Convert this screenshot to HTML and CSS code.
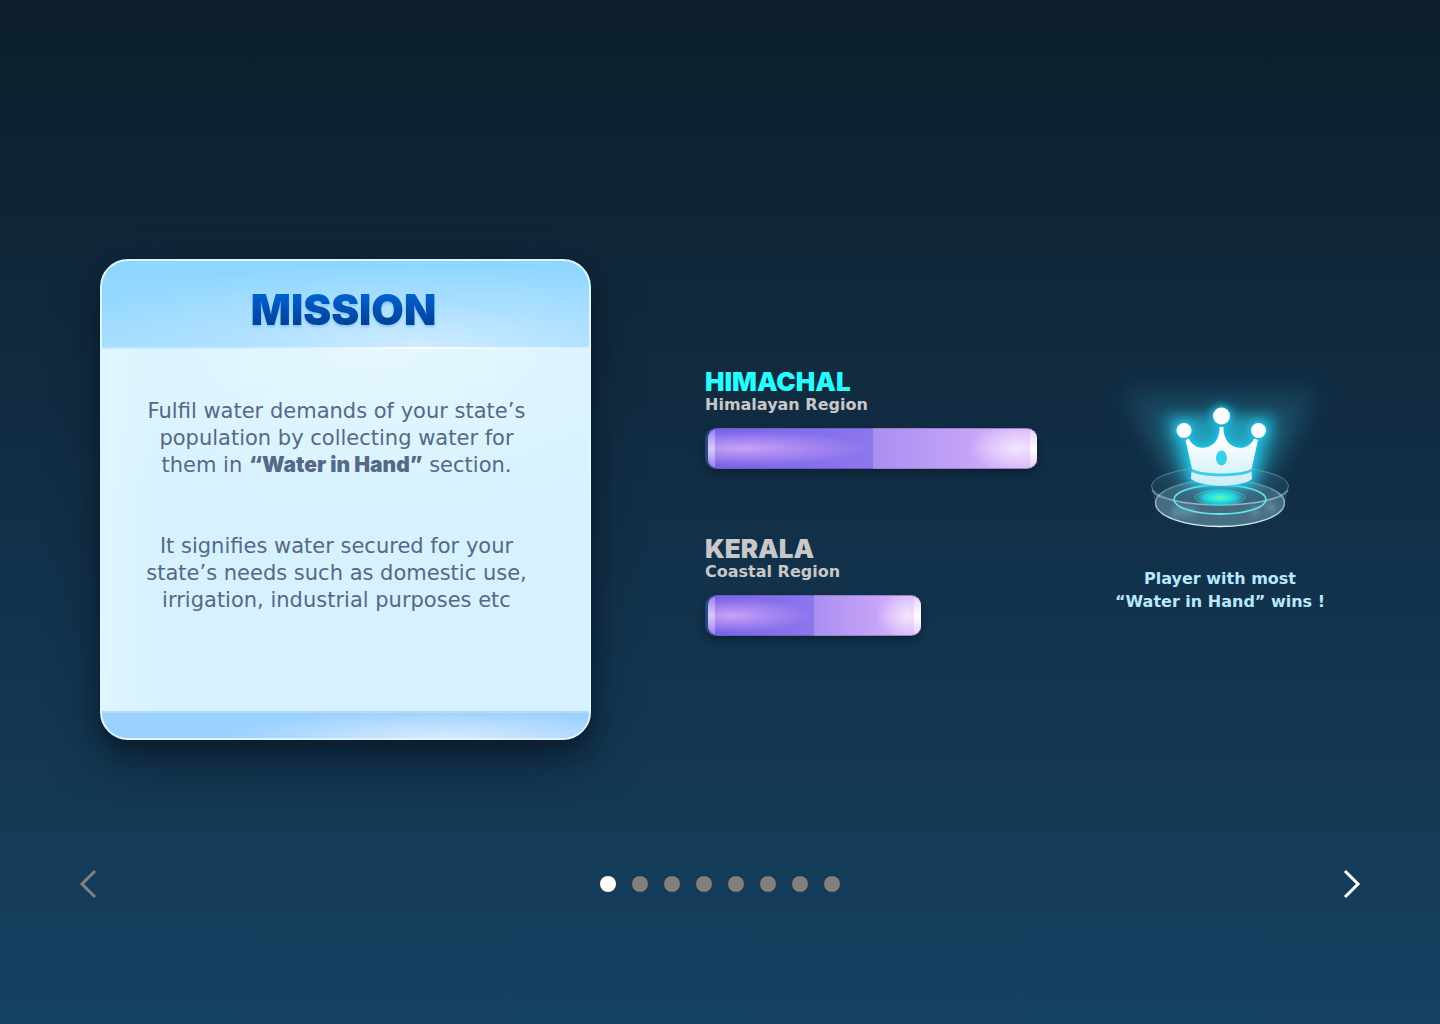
FILE: index.html
```html
<!DOCTYPE html>
<html lang="en">
<head>
<meta charset="utf-8">
<meta name="viewport" content="width=device-width, initial-scale=1">
<title>Mission</title>
<link rel="stylesheet" href="styles.css">
</head>
<body>
<main class="stage">
  <article class="card">
    <header class="card-head"><h1>MISSION</h1></header>
    <div class="card-body">
      <p>Fulfil water demands of your state’s<br>population by collecting water for<br>them in <strong>“Water in Hand”</strong> section.</p>
      <p>It signifies water secured for your<br>state’s needs such as domestic use,<br>irrigation, industrial purposes etc</p>
    </div>
    <footer class="card-foot"></footer>
  </article>

  <section class="scores">
    <div class="player">
      <h2 class="leader">HIMACHAL</h2>
      <p>Himalayan Region</p>
      <div class="bar" style="width:100%"><span class="fill fill-a"></span><span class="fill fill-b"></span></div>
    </div>
    <div class="player">
      <h2>KERALA</h2>
      <p>Coastal Region</p>
      <div class="bar" style="width:65%"><span class="fill fill-a"></span><span class="fill fill-b"></span></div>
    </div>
  </section>

  <section class="winner">
    <svg viewBox="0 0 240 200" aria-hidden="true">
      <defs>
        <linearGradient id="crown" x1="0" y1="56" x2="0" y2="136" gradientUnits="userSpaceOnUse"><stop offset=".4" stop-color="#fff"/><stop offset="1" stop-color="#ccecf6"/></linearGradient>
        <linearGradient id="beam" x1="0" y1="20" x2="0" y2="132" gradientUnits="userSpaceOnUse"><stop offset="0" stop-color="#2fa5c5" stop-opacity="0"/><stop offset="1" stop-color="#35b4d0" stop-opacity=".8"/></linearGradient>
        <radialGradient id="core"><stop offset="0" stop-color="#7df0a0"/><stop offset=".35" stop-color="#2beee2"/><stop offset=".7" stop-color="#27d9e2" stop-opacity=".8"/><stop offset="1" stop-color="#27cfe0" stop-opacity="0"/></radialGradient>
        <linearGradient id="glass" x1="0" y1="130" x2="0" y2="177" gradientUnits="userSpaceOnUse"><stop offset="0" stop-color="#8ed3e3" stop-opacity=".22"/><stop offset="1" stop-color="#9ed3e3" stop-opacity=".3"/></linearGradient>
        <linearGradient id="rim" x1="0" y1="130" x2="0" y2="177" gradientUnits="userSpaceOnUse"><stop offset="0" stop-color="#a9dce8" stop-opacity=".3"/><stop offset="1" stop-color="#d9f4fa"/></linearGradient>
        <filter id="soft" filterUnits="userSpaceOnUse" x="-60" y="-60" width="360" height="320"><feGaussianBlur stdDeviation="12"/></filter>
        <filter id="glow" filterUnits="userSpaceOnUse" x="-60" y="-60" width="360" height="320"><feGaussianBlur stdDeviation="7"/></filter>
        <filter id="tight" filterUnits="userSpaceOnUse" x="0" y="0" width="240" height="200"><feGaussianBlur stdDeviation="3"/></filter>
        <g id="shape">
          <circle cx="121.500" cy="66" r="8.500"/><circle cx="84" cy="80.500" r="7.500"/><circle cx="158.500" cy="80.500" r="7.500"/>
          <path d="M85.500 90 L89 88.500 C94 102 117 102 119.500 81 L119.500 77 H123.500 L123.500 81 C126 102 149 102 154 88.500 L158 90 L151.500 119 C140 125 103 125 92 119 Z"/>
          <path d="M91.500 121.500 C103 128 140 128 151.500 121.500 L152 129 C141 138 103 138 91 129 Z"/>
        </g>
      </defs>
      <path d="M18 36 H224 L160 132 H82 Z" fill="url(#beam)" opacity=".8" filter="url(#soft)"/>
      <path d="M66 66 L176 66 L156 134 H88 Z" fill="#29b9d6" opacity=".65" filter="url(#glow)"/>
      <g fill="none">
        <ellipse cx="120" cy="136" rx="68.500" ry="19" stroke="#93bcc9" stroke-opacity=".5" fill="#5aa4b9" fill-opacity=".13"/>
        <path d="M51.500 138 L56 156 C62 184 178 184 184 156 L188.500 138 C180 160 60 160 51.500 138Z" fill="#a6d3df" fill-opacity=".15"/>
        <ellipse cx="120" cy="153" rx="64.500" ry="23.500" fill="url(#glass)" stroke="url(#rim)" stroke-width="1.400"/>
        <path d="M52 140 C62 160 178 160 188 140" stroke="#bde3ed" stroke-opacity=".5" stroke-width="1.500"/>
        <g fill="#9bcce0" opacity=".35" filter="url(#tight)"><path d="M72 157h22v9H72z"/><path d="M151 157h8v9h-8zM166 153h9v9h-9z"/></g>
        <ellipse cx="120" cy="149.500" rx="46" ry="14.500" stroke="#63e4e9" stroke-width="1.800"/>
        <ellipse cx="120" cy="147.500" rx="25" ry="7.500" stroke="#47c9d2" stroke-opacity=".75"/>
      </g>
      <ellipse cx="120" cy="147.500" rx="25" ry="9" fill="url(#core)"/>
      <use href="#shape" fill="#1ecbee" stroke="#1ecbee" stroke-width="4" opacity=".7" filter="url(#glow)"/>
      <use href="#shape" fill="#22cdee" stroke="#22cdee" stroke-width="1" opacity=".8" filter="url(#tight)"/>
      <path d="M92 119 C103 125 140 125 151.500 119 V123 C140 128 103 128 92 123Z" fill="#35cfe8"/>
      <use href="#shape" fill="url(#crown)"/>
      <ellipse cx="121.500" cy="108" rx="5.500" ry="7.500" fill="#39cfe6"/>
    </svg>
    <p>Player with most<br>“Water in Hand” wins !</p>
  </section>
</main>

<nav class="pager" aria-label="Slides">
  <button class="arrow" aria-label="Previous" disabled><svg viewBox="0 0 16 28"><path d="M15 1 L2 14 L15 27"/></svg></button>
  <div class="dots">
    <button class="dot current" aria-label="Slide 1" aria-current="true"></button>
    <button class="dot" aria-label="Slide 2"></button>
    <button class="dot" aria-label="Slide 3"></button>
    <button class="dot" aria-label="Slide 4"></button>
    <button class="dot" aria-label="Slide 5"></button>
    <button class="dot" aria-label="Slide 6"></button>
    <button class="dot" aria-label="Slide 7"></button>
    <button class="dot" aria-label="Slide 8"></button>
  </div>
  <button class="arrow" aria-label="Next"><svg viewBox="0 0 16 28"><path d="M1 1 L14 14 L1 27"/></svg></button>
</nav>
</body>
</html>
```
FILE: styles.css
```css
* { box-sizing: border-box; }

body {
  margin: 0;
  min-height: 100vh;
  display: flex;
  flex-direction: column;
  font-family: "DejaVu Sans", "Noto Sans", sans-serif;
  background: linear-gradient(#0c1e2a, #10273a 25%, #12314a 55%, #153a56 80%, #154163);
}

h1, h2, p { margin: 0; }

.stage {
  display: grid;
  grid-template-columns: 604fr 396fr 240fr;
  align-items: start;
  padding: 259px 100px 0;
}

.card {
  margin-right: 113px;
  border: 2px solid #dff5fd;
  border-radius: 28px;
  overflow: hidden;
  background: #d5f2fe;
  box-shadow: 0 8px 16px rgba(10, 25, 38, .6), 0 24px 48px rgba(10, 25, 38, .65);
}

.card-head {
  height: 88px;
  padding: 12px 4px 0 0;
  display: flex;
  align-items: center;
  justify-content: center;
  border-bottom: 2px solid;
  border-image: linear-gradient(90deg, #bfe6ff, #d5efff 40%, #fff 65%, #d5efff) 1;
  background: radial-gradient(ellipse 75% 100% at 65% 100%, #cdebff, rgba(190, 230, 255, .5) 50%, transparent), linear-gradient(#8bd5ff, #a2dcff);
}

h1 {
  font-family: Inter, sans-serif;
  font-size: 42px;
  line-height: 48px;
  font-weight: 900;
  color: transparent;
  background: linear-gradient(#0060cc 20%, #00429a 80%);
  background-clip: text;
  filter: drop-shadow(0 2px 1px rgba(60, 150, 230, .35));
}

.card-body {
  display: grid;
  gap: 54px;
  padding: 49px 64px 97px 46px;
  text-align: center;
  font-size: 21px;
  line-height: 27px;
  white-space: nowrap;
  justify-content: center;
  color: #556987;
  background: linear-gradient(90deg, rgba(228, 246, 255, .8), transparent 12%), radial-gradient(ellipse 80% 50% at 55% 0, #e5f7ff, transparent), #d5f2fe;
}

strong { font: 900 21px/26px Inter, sans-serif; }

.card-foot {
  height: 27px;
  border-top: 2px solid #b5d9fa;
  background: radial-gradient(ellipse 45% 110% at 70% 100%, #d7eafe, transparent), #9bd1ff;
}

.scores {
  display: grid;
  gap: 68px;
  padding: 111px 63px 0 0;
  margin-left: 1px;
  color: #c8c8c8;
}

h2 { font: 900 26px/24px Inter, sans-serif; }
.leader { color: #27fdfc; }
.player p { font-size: 16px; line-height: 22px; font-weight: 700; }

.bar {
  height: 41px;
  margin-top: 12px;
  padding-left: 3px;
  display: flex;
  border-radius: 11px;
  background: #23487c;
  box-shadow: 0 4px 8px rgba(8, 22, 36, .6);
}

.fill {
  flex: 1;
  border-top: 1px solid #725fbb;
  border-bottom: 1px solid #725fbb;
}
.fill-a {
  border-radius: 10px 0 0 10px;
  background: linear-gradient(#9a84ee, #d9c8fa, #9a84ee) 0 0 / 7px 100% no-repeat, radial-gradient(ellipse 75% 45% at 22% 50%, #c7a2f6, transparent), linear-gradient(90deg, #7761e9, #8e76ed);
}
.fill-b {
  border-color: #9a83c4;
  border-radius: 0 10px 10px 0;
  background: linear-gradient(#e8cdfb, #fff, #e8cdfb) 100% 0 / 7px 100% no-repeat, radial-gradient(ellipse 30% 65% at 88% 50%, #f2e6fd, transparent), linear-gradient(90deg, #a98ef2, #dab4fb);
}

.winner {
  padding-top: 91px;
  text-align: center;
  font-size: 16px;
  line-height: 23px;
  font-weight: 700;
  white-space: nowrap;
  color: #b8e8fd;
}
.winner svg { display: block; width: 100%; overflow: visible; margin-bottom: 17px; }

.pager {
  display: flex;
  align-items: center;
  justify-content: space-between;
  padding: 128px 80px 124px;
}

button { padding: 0; border: 0; background: none; cursor: pointer; }

.arrow { height: 32px; color: #fff; }
.arrow:disabled { color: #808080; cursor: default; }
.arrow svg { display: block; width: 16px; height: 28px; overflow: visible; fill: none; stroke: currentColor; stroke-width: 3; }

.dots { display: flex; gap: 16px; }
.dot { width: 16px; height: 16px; border-radius: 50%; background: #808080; }
.current { background: #fff; }
```
